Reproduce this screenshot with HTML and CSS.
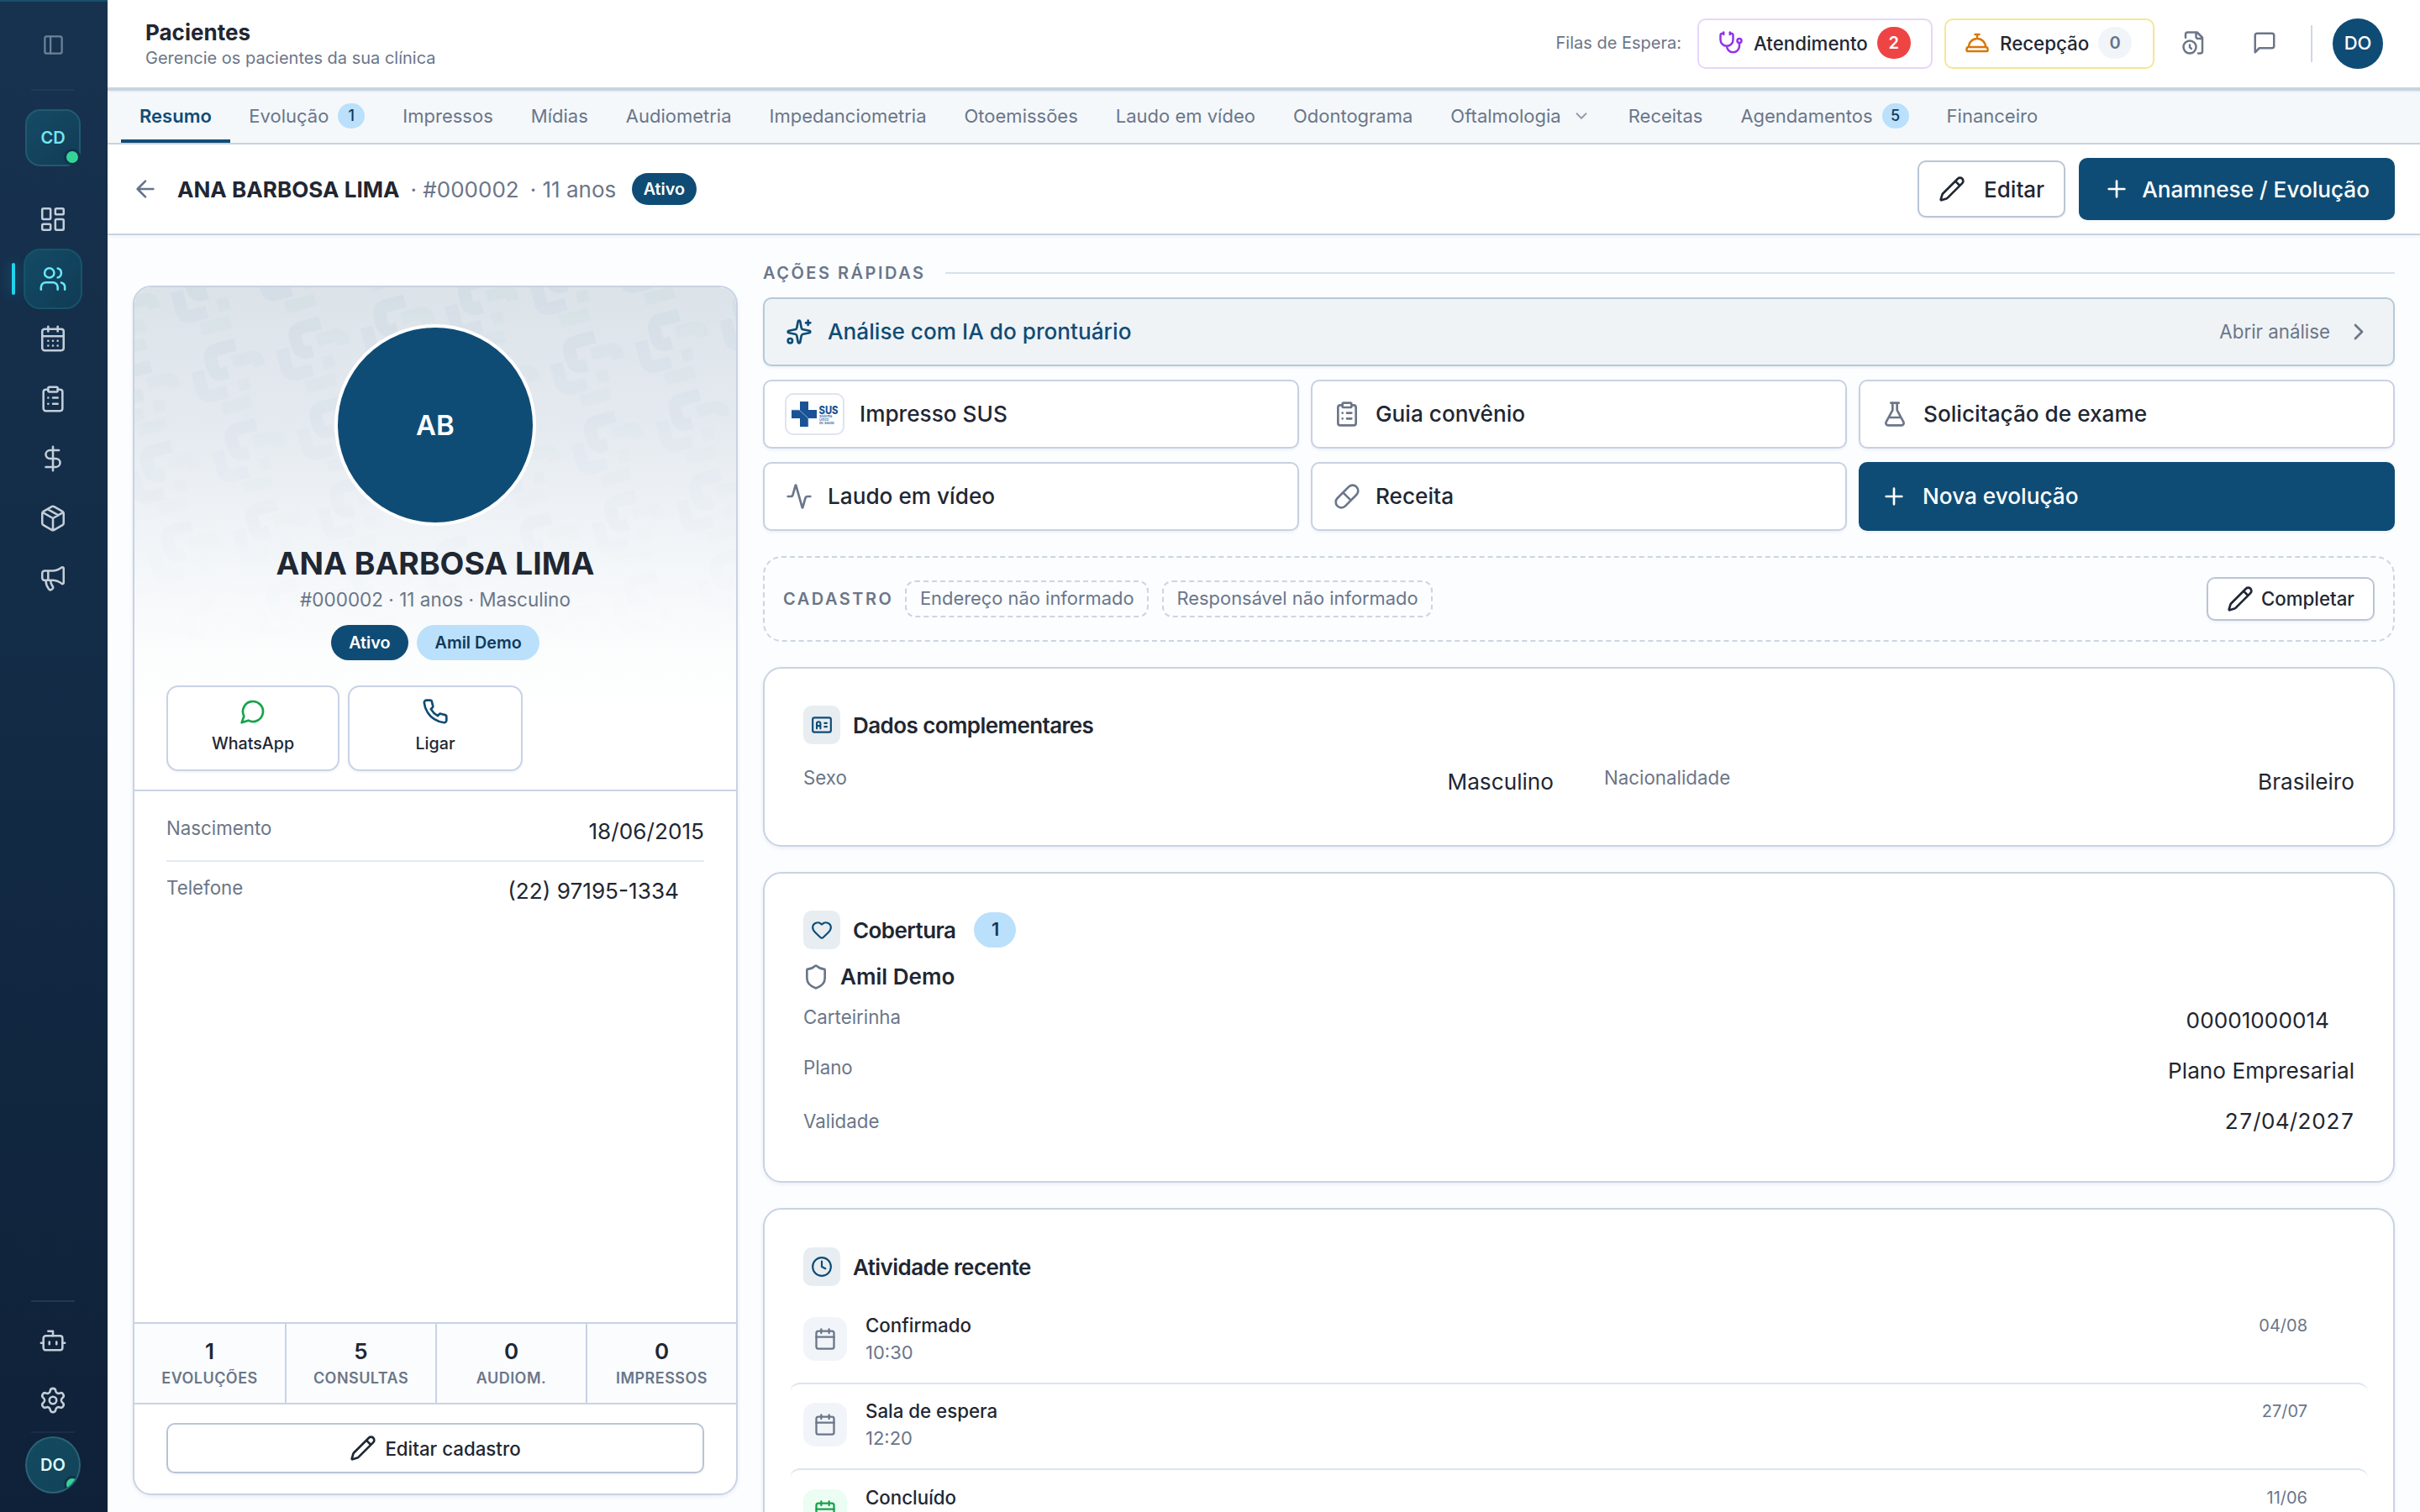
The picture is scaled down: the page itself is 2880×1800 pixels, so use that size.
FILE: index.html
```
<!DOCTYPE html>
<html lang="pt-BR">
<head>
    <meta charset="UTF-8">
    <meta name="viewport" content="width=device-width, initial-scale=1.0">
    <title>Pacientes</title>
    <link rel="stylesheet" href="styles.css">
</head>
<body>
    <!-- Icon sprite -->
    <svg class="sprite" aria-hidden="true">
        <symbol id="panel" viewBox="0 0 24 24"><rect x="3" y="3" width="18" height="18" rx="2"/><path d="M9 3v18"/></symbol>
        <symbol id="dashboard" viewBox="0 0 24 24"><rect x="3" y="3" width="7" height="9" rx="1"/><rect x="14" y="3" width="7" height="5" rx="1"/><rect x="14" y="12" width="7" height="9" rx="1"/><rect x="3" y="16" width="7" height="5" rx="1"/></symbol>
        <symbol id="users" viewBox="0 0 24 24"><path d="M16 21v-2a4 4 0 0 0-4-4H6a4 4 0 0 0-4 4v2M16 3.128a4 4 0 0 1 0 7.744M22 21v-2a4 4 0 0 0-3-3.87"/><circle cx="9" cy="7" r="4"/></symbol>
        <symbol id="calendar-days" viewBox="0 0 24 24"><path d="M8 2v4M16 2v4M3 10h18M8 14h.01M12 14h.01M16 14h.01M8 18h.01M12 18h.01M16 18h.01"/><rect x="3" y="4" width="18" height="18" rx="2"/></symbol>
        <symbol id="calendar" viewBox="0 0 24 24"><path d="M8 2v4M16 2v4M3 10h18"/><rect x="3" y="4" width="18" height="18" rx="2"/></symbol>
        <symbol id="clipboard" viewBox="0 0 24 24"><rect x="8" y="2" width="8" height="4" rx="1"/><path d="M16 4h2a2 2 0 0 1 2 2v14a2 2 0 0 1-2 2H6a2 2 0 0 1-2-2V6a2 2 0 0 1 2-2h2M12 11h4M12 16h4M8 11h.01M8 16h.01"/></symbol>
        <symbol id="dollar" viewBox="0 0 24 24"><path d="M12 2v20M17 5H9.5a3.5 3.5 0 0 0 0 7h5a3.5 3.5 0 0 1 0 7H6"/></symbol>
        <symbol id="package" viewBox="0 0 24 24"><path d="M11 21.73a2 2 0 0 0 2 0l7-4A2 2 0 0 0 21 16V8a2 2 0 0 0-1-1.73l-7-4a2 2 0 0 0-2 0l-7 4A2 2 0 0 0 3 8v8a2 2 0 0 0 1 1.73zM12 22V12M3.29 7 12 12l8.71-5M7.5 4.27l9 5.15"/></symbol>
        <symbol id="megaphone" viewBox="0 0 24 24"><path d="M11 6a13 13 0 0 0 8.4-2.8A1 1 0 0 1 21 4v12a1 1 0 0 1-1.6.8A13 13 0 0 0 11 14H5a2 2 0 0 1-2-2V8a2 2 0 0 1 2-2zM6 14a12 12 0 0 0 2.4 7.2 2 2 0 0 0 3.2-2.4A8 8 0 0 1 10 14M8 6v8"/></symbol>
        <symbol id="bot" viewBox="0 0 24 24"><path d="M12 8V4H8M2 14h2M20 14h2M15 13v2M9 13v2"/><rect x="4" y="8" width="16" height="12" rx="2"/></symbol>
        <symbol id="settings" viewBox="0 0 24 24"><path d="M9.671 4.136a2.34 2.34 0 0 1 4.659 0 2.34 2.34 0 0 0 3.319 1.915 2.34 2.34 0 0 1 2.33 4.033 2.34 2.34 0 0 0 0 3.831 2.34 2.34 0 0 1-2.33 4.033 2.34 2.34 0 0 0-3.319 1.915 2.34 2.34 0 0 1-4.659 0 2.34 2.34 0 0 0-3.32-1.915 2.34 2.34 0 0 1-2.33-4.033 2.34 2.34 0 0 0 0-3.831A2.34 2.34 0 0 1 6.35 6.051a2.34 2.34 0 0 0 3.319-1.915"/><circle cx="12" cy="12" r="3"/></symbol>
        <symbol id="stethoscope" viewBox="0 0 24 24"><path d="M11 2v2M5 2v2M5 3H4a2 2 0 0 0-2 2v4a6 6 0 0 0 12 0V5a2 2 0 0 0-2-2h-1M8 15a6 6 0 0 0 12 0v-3"/><circle cx="20" cy="10" r="2"/></symbol>
        <symbol id="bell" viewBox="0 0 24 24"><path d="M3 20a1 1 0 0 1-1-1v-1a2 2 0 0 1 2-2h16a2 2 0 0 1 2 2v1a1 1 0 0 1-1 1ZM20 16a8 8 0 1 0-16 0M12 4v4M10 4h4"/></symbol>
        <symbol id="file-clock" viewBox="0 0 24 24"><path d="M16 22h2a2 2 0 0 0 2-2V7l-5-5H6a2 2 0 0 0-2 2v3M14 2v4a2 2 0 0 0 2 2h4M9.5 17.5 8 16.25V14"/><circle cx="8" cy="16" r="6"/></symbol>
        <symbol id="message" viewBox="0 0 24 24"><path d="M21 15a2 2 0 0 1-2 2H7l-4 4V5a2 2 0 0 1 2-2h14a2 2 0 0 1 2 2z"/></symbol>
        <symbol id="chat" viewBox="0 0 24 24"><path d="M7.9 20A9 9 0 1 0 4 16.1L2 22Z"/></symbol>
        <symbol id="phone" viewBox="0 0 24 24"><path d="M22 16.92v3a2 2 0 0 1-2.18 2 19.79 19.79 0 0 1-8.63-3.07 19.5 19.5 0 0 1-6-6 19.79 19.79 0 0 1-3.07-8.67A2 2 0 0 1 4.11 2h3a2 2 0 0 1 2 1.72 12.84 12.84 0 0 0 .7 2.81 2 2 0 0 1-.45 2.11L8.09 9.91a16 16 0 0 0 6 6l1.27-1.27a2 2 0 0 1 2.11-.45 12.84 12.84 0 0 0 2.81.7A2 2 0 0 1 22 16.92z"/></symbol>
        <symbol id="arrow-left" viewBox="0 0 24 24"><path d="m12 19-7-7 7-7M19 12H5"/></symbol>
        <symbol id="pencil" viewBox="0 0 24 24"><path d="M21.174 6.812a1 1 0 0 0-3.986-3.987L3.842 16.174a2 2 0 0 0-.5.83l-1.321 4.352a.5.5 0 0 0 .623.622l4.353-1.32a2 2 0 0 0 .83-.497zM15 5l4 4"/></symbol>
        <symbol id="plus" viewBox="0 0 24 24"><path d="M5 12h14M12 5v14"/></symbol>
        <symbol id="chevron-down" viewBox="0 0 24 24"><path d="m6 9 6 6 6-6"/></symbol>
        <symbol id="chevron-right" viewBox="0 0 24 24"><path d="m9 18 6-6-6-6"/></symbol>
        <symbol id="sparkles" viewBox="0 0 24 24"><path d="M11.017 2.814a1 1 0 0 1 1.966 0l1.051 5.558a2 2 0 0 0 1.594 1.594l5.558 1.051a1 1 0 0 1 0 1.966l-5.558 1.051a2 2 0 0 0-1.594 1.594l-1.051 5.558a1 1 0 0 1-1.966 0l-1.051-5.558a2 2 0 0 0-1.594-1.594l-5.558-1.051a1 1 0 0 1 0-1.966l5.558-1.051a2 2 0 0 0 1.594-1.594zM20 2v4M22 4h-4"/><circle cx="4" cy="20" r="2"/></symbol>
        <symbol id="flask" viewBox="0 0 24 24"><path d="M14 2v6a2 2 0 0 0 .245.96l5.51 10.08A2 2 0 0 1 18 22H6a2 2 0 0 1-1.755-2.96l5.51-10.08A2 2 0 0 0 10 8V2M6.453 15h11.094M8.5 2h7"/></symbol>
        <symbol id="activity" viewBox="0 0 24 24"><path d="M22 12h-2.48a2 2 0 0 0-1.93 1.46l-2.35 8.36a.25.25 0 0 1-.48 0L9.24 2.18a.25.25 0 0 0-.48 0l-2.35 8.36A2 2 0 0 1 4.49 12H2"/></symbol>
        <symbol id="pill" viewBox="0 0 24 24"><path d="m10.5 20.5 10-10a4.95 4.95 0 1 0-7-7l-10 10a4.95 4.95 0 1 0 7 7ZM8.5 8.5l7 7"/></symbol>
        <symbol id="id-card" viewBox="0 0 24 24"><rect x="2" y="4" width="20" height="16" rx="2"/><path d="M6.5 16v-5.500a2 2 0 0 1 4 0V16M6.500 13h4M15 10h2.500M15 14h2.500"/></symbol>
        <symbol id="heart" viewBox="0 0 24 24"><path d="M2 9.500a5.500 5.500 0 0 1 9.591-3.676.56.56 0 0 0 .818 0A5.490 5.490 0 0 1 22 9.500c0 2.290-1.500 4-3 5.500l-5.492 5.313a2 2 0 0 1-3 .019L5 15c-1.500-1.500-3-3.200-3-5.500"/></symbol>
        <symbol id="shield" viewBox="0 0 24 24"><path d="M20 13c0 5-3.500 7.500-7.660 8.950a1 1 0 0 1-.67-.01C7.500 20.500 4 18 4 13V6a1 1 0 0 1 1-1c2 0 4.500-1.200 6.240-2.720a1.170 1.170 0 0 1 1.520 0C14.510 3.810 17 5 19 5a1 1 0 0 1 1 1z"/></symbol>
        <symbol id="clock" viewBox="0 0 24 24"><circle cx="12" cy="12" r="10"/><path d="M12 6v6l4 2"/></symbol>
    </svg>

    <div class="app">
        <!-- Sidebar -->
        <aside class="sidebar">
            <div class="side-toggle"><svg class="icon"><use href="#panel"/></svg></div>
            <div class="side-line"></div>
            <div class="clinic">CD<span class="online"></span></div>
            <nav class="side-nav">
                <a class="side-item"><svg class="icon"><use href="#dashboard"/></svg></a>
                <a class="side-item active"><svg class="icon"><use href="#users"/></svg></a>
                <a class="side-item"><svg class="icon"><use href="#calendar-days"/></svg></a>
                <a class="side-item"><svg class="icon"><use href="#clipboard"/></svg></a>
                <a class="side-item"><svg class="icon"><use href="#dollar"/></svg></a>
                <a class="side-item"><svg class="icon"><use href="#package"/></svg></a>
                <a class="side-item"><svg class="icon"><use href="#megaphone"/></svg></a>
            </nav>
            <div class="side-bottom">
                <div class="side-line"></div>
                <a class="side-item"><svg class="icon"><use href="#bot"/></svg></a>
                <a class="side-item"><svg class="icon"><use href="#settings"/></svg></a>
                <div class="side-line faint"></div>
                <div class="side-user">DO<span class="online"></span></div>
            </div>
        </aside>

        <div class="page">
            <!-- Header -->
            <header class="topbar">
                <div class="heading">
                    <h1>Pacientes</h1>
                    <p>Gerencie os pacientes da sua clínica</p>
                </div>
                <div class="queues">
                    <span class="queue-label">Filas de Espera:</span>
                    <button class="queue purple"><svg class="icon"><use href="#stethoscope"/></svg>Atendimento<span class="count red">2</span></button>
                    <button class="queue yellow"><svg class="icon"><use href="#bell"/></svg>Recepção<span class="count gray">0</span></button>
                    <svg class="icon top-icon"><use href="#file-clock"/></svg>
                    <svg class="icon top-icon"><use href="#message"/></svg>
                    <div class="top-user">DO</div>
                </div>
            </header>

            <nav class="tabs">
                <a class="tab active">Resumo</a>
                <a class="tab">Evolução<span class="tab-count">1</span></a>
                <a class="tab">Impressos</a>
                <a class="tab">Mídias</a>
                <a class="tab">Audiometria</a>
                <a class="tab">Impedanciometria</a>
                <a class="tab">Otoemissões</a>
                <a class="tab">Laudo em vídeo</a>
                <a class="tab">Odontograma</a>
                <a class="tab">Oftalmologia<svg class="icon"><use href="#chevron-down"/></svg></a>
                <a class="tab">Receitas</a>
                <a class="tab">Agendamentos<span class="tab-count">5</span></a>
                <a class="tab">Financeiro</a>
            </nav>

            <section class="patient-bar">
                <svg class="icon back"><use href="#arrow-left"/></svg>
                <strong>ANA BARBOSA LIMA</strong>
                <span class="meta">· #000002</span>
                <span class="meta">· 11 anos</span>
                <span class="badge small">Ativo</span>
                <div class="patient-actions">
                    <button class="btn"><svg class="icon"><use href="#pencil"/></svg>Editar</button>
                    <button class="btn primary"><svg class="icon"><use href="#plus"/></svg>Anamnese / Evolução</button>
                </div>
            </section>

            <main class="content">
                <!-- Patient card -->
                <section class="profile">
                    <div class="hero">
                        <svg class="hero-pattern">
                            <defs>
                                <pattern id="logos" width="104" height="98" patternUnits="userSpaceOnUse" patternTransform="translate(50 72) rotate(-14.500)">
                                    <g fill="none" stroke-width="15" stroke-linejoin="round">
                                        <path class="mark-blue" d="M69 14H45a9 9 0 0 0-9 9v12a9 9 0 0 0 9 9h7"/>
                                        <path class="mark-green" d="M60 33h23a7 7 0 0 1 7 7v6"/>
                                        <path class="mark-violet" d="M17 33v24a9 9 0 0 0 9 9h20"/>
                                        <path class="mark-green" d="M60 62h14"/>
                                        <path class="mark-green" d="M34 84h36"/>
                                    </g>
                                </pattern>
                            </defs>
                            <rect width="100%" height="100%" fill="url(#logos)"/>
                        </svg>
                        <div class="avatar">AB</div>
                        <h2>ANA BARBOSA LIMA</h2>
                        <p class="hero-sub">#000002 · 11 anos · Masculino</p>
                        <div class="badges">
                            <span class="badge">Ativo</span>
                            <span class="badge light">Amil Demo</span>
                        </div>
                        <div class="contacts">
                            <button class="contact"><svg class="icon green"><use href="#chat"/></svg>WhatsApp</button>
                            <button class="contact"><svg class="icon blue"><use href="#phone"/></svg>Ligar</button>
                        </div>
                    </div>
                    <div class="profile-data">
                        <div class="row"><span class="label">Nascimento</span><span class="value">18/06/2015</span></div>
                        <div class="row copyable"><span class="label">Telefone</span><span class="value">(22) 97195-1334</span></div>
                    </div>
                    <div class="stats">
                        <div class="stat"><b>1</b><span>EVOLUÇÕES</span></div>
                        <div class="stat"><b>5</b><span>CONSULTAS</span></div>
                        <div class="stat"><b>0</b><span>AUDIOM.</span></div>
                        <div class="stat"><b>0</b><span>IMPRESSOS</span></div>
                    </div>
                    <div class="profile-footer">
                        <button class="btn slim"><svg class="icon"><use href="#pencil"/></svg>Editar cadastro</button>
                    </div>
                </section>

                <!-- Main column -->
                <div class="column">
                    <div class="section-title"><span>AÇÕES RÁPIDAS</span></div>
                    <div class="actions">
                        <a class="action ai"><svg class="icon"><use href="#sparkles"/></svg>Análise com IA do prontuário<span class="open">Abrir análise</span><svg class="icon chevron"><use href="#chevron-right"/></svg></a>
                        <a class="action">
                            <span class="sus">
                                <svg viewBox="0 0 58 32">
                                    <path class="sus-cross" d="M11 1h10v10h10v10H21v10H11V21H1V11h10z"/>
                                    <path class="sus-line" d="M1 11h9l11 10v10"/>
                                    <text class="sus-name" x="33.500" y="15.500" textLength="23" lengthAdjust="spacingAndGlyphs">SUS</text>
                                    <text class="sus-text" x="34" y="20">Sistema</text>
                                    <text class="sus-text" x="34" y="24">Único</text>
                                    <text class="sus-text" x="34" y="28">de Saúde</text>
                                </svg>
                            </span>Impresso SUS</a>
                        <a class="action"><svg class="icon"><use href="#clipboard"/></svg>Guia convênio</a>
                        <a class="action"><svg class="icon"><use href="#flask"/></svg>Solicitação de exame</a>
                        <a class="action"><svg class="icon"><use href="#activity"/></svg>Laudo em vídeo</a>
                        <a class="action"><svg class="icon"><use href="#pill"/></svg>Receita</a>
                        <a class="action solid"><svg class="icon"><use href="#plus"/></svg>Nova evolução</a>
                    </div>

                    <div class="pending">
                        <span class="pending-title">CADASTRO</span>
                        <span class="chip">Endereço não informado</span>
                        <span class="chip">Responsável não informado</span>
                        <button class="btn compact"><svg class="icon"><use href="#pencil"/></svg>Completar</button>
                    </div>

                    <section class="card extra">
                        <h3><span class="card-icon"><svg class="icon"><use href="#id-card"/></svg></span>Dados complementares</h3>
                        <div class="pair">
                            <div class="row"><span class="label">Sexo</span><span class="value">Masculino</span></div>
                            <div class="row"><span class="label">Nacionalidade</span><span class="value">Brasileiro</span></div>
                        </div>
                    </section>

                    <section class="card coverage">
                        <h3><span class="card-icon"><svg class="icon"><use href="#heart"/></svg></span>Cobertura<span class="card-count">1</span></h3>
                        <div class="plan"><svg class="icon"><use href="#shield"/></svg>Amil Demo</div>
                        <div class="row copyable"><span class="label">Carteirinha</span><span class="value">00001000014</span></div>
                        <div class="row"><span class="label">Plano</span><span class="value">Plano Empresarial</span></div>
                        <div class="row even"><span class="label">Validade</span><span class="value tabular">27/04/2027</span></div>
                    </section>

                    <section class="card recent">
                        <h3><span class="card-icon"><svg class="icon"><use href="#clock"/></svg></span>Atividade recente</h3>
                        <div class="event"><span class="event-icon"><svg class="icon"><use href="#calendar"/></svg></span><div><b>Confirmado</b><span>10:30</span></div><time>04/08</time></div>
                        <div class="event"><span class="event-icon"><svg class="icon"><use href="#calendar"/></svg></span><div><b>Sala de espera</b><span>12:20</span></div><time>27/07</time></div>
                        <div class="event done"><span class="event-icon"><svg class="icon"><use href="#calendar"/></svg></span><div><b>Concluído</b></div><time>11/06</time></div>
                    </section>
                </div>
            </main>
        </div>
    </div>
</body>
</html>
```
FILE: styles.css
```
/* General Styles */
* {
    box-sizing: border-box;
}
body {
    margin: 0;
    height: 1800px;
    overflow: hidden;
    font-family: Inter, "Liberation Sans", sans-serif;
    font-size: 26px;
    color: #1f2733;
    background-color: #fbfdff;
}
h1, h2, h3, p {
    margin: 0;
}
button {
    font-family: inherit;
    color: inherit;
    margin: 0;
    padding: 0;
}
.sprite {
    display: none;
}
.icon {
    width: 32px;
    height: 32px;
    flex: none;
    fill: none;
    stroke: currentColor;
    stroke-width: 2;
    stroke-linecap: round;
    stroke-linejoin: round;
}
.app {
    display: flex;
    height: 1800px;
    overflow: hidden;
}

/* Sidebar */
.sidebar {
    width: 128px;
    flex: none;
    display: flex;
    flex-direction: column;
    align-items: center;
    padding-right: 2px;
    border-top: 2px solid #17506d;
    background: linear-gradient(#17324f, #132c47 40%, #0f2138);
    color: #c3ced9;
}
.side-toggle {
    height: 104px;
    padding-top: 38px;
    color: #6c8297;
}
.side-toggle .icon {
    width: 27px;
    height: 27px;
}
.side-line {
    width: 52px;
    height: 2px;
    background-color: #213a54;
}
.side-line.faint {
    background-color: #182e47;
}
.clinic {
    position: relative;
    width: 66px;
    height: 68px;
    margin-top: 22px;
    border: 2px solid #225a71;
    border-radius: 18px;
    background: linear-gradient(135deg, #154b65, #113c56);
    color: #74e5f3;
    font-size: 20px;
    font-weight: 600;
    line-height: 64px;
    text-align: center;
}
.online {
    position: absolute;
    right: -2px;
    bottom: -1px;
    width: 20px;
    height: 20px;
    border: 3px solid #12324a;
    border-radius: 50%;
    background-color: #34d399;
}
.side-nav {
    margin-top: 27px;
    display: flex;
    flex-direction: column;
    align-items: center;
}
.side-item {
    position: relative;
    width: 70px;
    height: 71.300px;
    display: flex;
    align-items: center;
    justify-content: center;
}
.side-item .icon {
    width: 34px;
    height: 34px;
    stroke-width: 1.800;
}
.side-item.active {
    border: 2px solid #165467;
    border-radius: 20px;
    background: linear-gradient(135deg, #134b65, #113b56);
    color: #67e8f9;
}
.side-item.active::before {
    content: "";
    position: absolute;
    left: -16px;
    top: 15px;
    width: 4px;
    height: 38px;
    border-radius: 2px;
    background-color: #22d3ee;
    box-shadow: 0 0 16px rgba(34, 211, 238, 0.400);
}
.side-bottom {
    margin-top: auto;
    padding-bottom: 22px;
    display: flex;
    flex-direction: column;
    align-items: center;
}
.side-bottom .side-line {
    margin-bottom: 10px;
}
.side-bottom .side-line.faint {
    margin: 1px 0 4px;
}
.side-user {
    position: relative;
    width: 66px;
    height: 68px;
    overflow: hidden;
    border: 2px solid #2b6276;
    border-radius: 50%;
    background: linear-gradient(135deg, #134b60, #124258);
    color: #dff8fd;
    font-size: 20px;
    font-weight: 600;
    line-height: 64px;
    text-align: center;
}

/* Top bar */
.page {
    flex: 1;
    min-width: 0;
    display: flex;
    flex-direction: column;
}
.topbar {
    height: 108px;
    flex: none;
    display: flex;
    justify-content: space-between;
    padding: 0 44px 0 45px;
    background-color: #fff;
    border-bottom: 4px solid #c8d3df;
}
.heading {
    padding-top: 23px;
}
.heading h1 {
    font-size: 26px;
    line-height: 32px;
    font-weight: 700;
}
.heading p {
    margin-top: 1px;
    font-size: 20px;
    line-height: 26px;
    color: #6b7689;
}
.queues {
    display: flex;
    align-items: center;
    font-size: 20px;
    color: #6b7689;
}
.queue-label {
    margin: 0 19px 2px 0;
}
.queue {
    height: 60px;
    display: flex;
    align-items: center;
    padding-bottom: 2px;
    border: 2px solid #e6d6fb;
    border-radius: 10px;
    background-color: #fff;
    font-size: 22.300px;
    font-weight: 500;
    color: #1f2733;
}
.queue .icon {
    width: 30px;
    height: 30px;
    margin-right: 12px;
}
.queue.purple {
    width: 280px;
    margin-right: 14px;
    padding-left: 23px;
}
.queue.yellow {
    width: 250px;
    padding-left: 22px;
    border-color: #f7e694;
}
.queue.purple .icon {
    color: #9333ea;
}
.queue.yellow .icon {
    color: #d97706;
}
.count {
    width: 40px;
    height: 38px;
    margin-left: 11px;
    border-radius: 20px;
    font-size: 20px;
    font-weight: 600;
    line-height: 38px;
    text-align: center;
}
.count.red {
    background-color: #ef4444;
    color: #fff;
}
.count.gray {
    background-color: #f1f5f9;
    color: #64748b;
}
.top-icon {
    width: 30px;
    height: 30px;
    margin-left: 32px;
    margin-bottom: 2px;
}
.top-icon + .top-icon {
    margin-left: 54px;
}
.top-user {
    position: relative;
    width: 60px;
    height: 60px;
    margin-left: 66px;
    border-radius: 50%;
    background-color: #0f4c75;
    color: #fff;
    font-size: 22px;
    font-weight: 500;
    line-height: 58px;
    text-align: center;
}
.top-user::before {
    content: "";
    position: absolute;
    left: -26px;
    top: 8px;
    width: 2px;
    height: 44px;
    background-color: #cfd8e3;
}

/* Tabs */
.tabs {
    height: 64px;
    flex: none;
    display: flex;
    padding: 0 16px;
    border-top: 2px solid #e9eff5;
    border-bottom: 2px solid #c8d3e0;
    background-color: #f4f8fb;
}
.tab {
    display: flex;
    align-items: center;
    padding: 0 22.500px 4px;
    font-size: 22px;
    color: #6b7689;
}
.tab.active {
    padding: 0 22px;
    border-bottom: 4px solid #0f4c75;
    color: #0f4c75;
    font-weight: 600;
}
.tab .icon {
    width: 22px;
    height: 22px;
    margin-left: 13px;
    opacity: 0.700;
}
.tab-count {
    width: 32px;
    height: 30px;
    margin-left: 11px;
    border-radius: 16px;
    background-color: #bae0fb;
    color: #12395a;
    font-size: 18px;
    font-weight: 500;
    line-height: 30px;
    text-align: center;
}

/* Patient bar */
.patient-bar {
    height: 108px;
    flex: none;
    display: flex;
    align-items: center;
    padding: 0 30px 0 29px;
    background-color: #fff;
    border-bottom: 2px solid #c8d3e0;
    box-shadow: 0 2px 4px rgba(30, 60, 100, 0.050);
}
.back {
    margin-right: 22px;
    color: #64748b;
}
.patient-bar strong {
    font-size: 26.100px;
}
.meta {
    margin-left: 13px;
    font-size: 26px;
    color: #6b7689;
}
.badge {
    height: 42px;
    padding: 0 20px;
    border-radius: 21px;
    background-color: #0f4c75;
    color: #fff;
    font-size: 19.800px;
    font-weight: 600;
    line-height: 42px;
}
.badge.small {
    height: 38px;
    margin-left: 19px;
    padding: 0 13.500px;
    line-height: 38px;
}
.badge.light {
    background-color: #bae0fb;
    color: #12395a;
}
.patient-actions {
    margin-left: auto;
    display: flex;
    align-items: center;
    gap: 16px;
}
.btn {
    height: 68px;
    padding: 0 23px;
    display: flex;
    align-items: center;
    gap: 22px;
    border: 2px solid #b9c5d5;
    border-radius: 10px;
    background-color: #fff;
    font-size: 26px;
    font-weight: 500;
    box-shadow: 0 2px 3px rgba(30, 60, 100, 0.050);
}
.btn.primary {
    height: 74px;
    padding: 0 30px 0 29px;
    gap: 14px;
    border: 0;
    background-color: #0f4c75;
    color: #fff;
    font-size: 26.150px;
}
.btn.slim {
    width: 100%;
    height: 60px;
    justify-content: center;
    gap: 10px;
    font-size: 22.300px;
}
.btn.compact {
    height: 52px;
    margin-left: auto;
    padding: 0 22px 1px;
    gap: 9px;
    font-size: 22.300px;
}

/* Content */
.content {
    flex: 1;
    min-height: 0;
    display: flex;
    gap: 30px;
    padding: 30px 30px 0;
}
.profile {
    width: 720px;
    height: 1440px;
    flex: none;
    margin-top: 30px;
    display: flex;
    flex-direction: column;
    overflow: hidden;
    border: 2px solid #c8d3e3;
    border-radius: 22px;
    background-color: #fff;
    box-shadow: 0 2px 5px rgba(30, 60, 100, 0.070);
}
.hero {
    position: relative;
    height: 600px;
    flex: none;
    display: flex;
    flex-direction: column;
    align-items: center;
    padding: 44px 38px 0;
    border-bottom: 2px solid #c8d3e3;
    background: linear-gradient(#dbe3e9, #e5eaf0 28%, #f2f5f8 52%, #fcfdfd 74%, #fff 85%);
}
.hero > * {
    position: relative;
}
.hero .hero-pattern {
    position: absolute;
    left: 0;
    top: 0;
    width: 100%;
    height: 440px;
    -webkit-mask-image: linear-gradient(#000, rgba(0, 0, 0, 0.650) 30%, transparent);
    mask-image: linear-gradient(#000, rgba(0, 0, 0, 0.650) 30%, transparent);
}
.mark-blue {
    stroke: rgba(15, 90, 150, 0.045);
}
.mark-green {
    stroke: rgba(20, 120, 100, 0.025);
}
.mark-violet {
    stroke: rgba(40, 80, 160, 0.035);
}
.avatar {
    width: 240px;
    height: 240px;
    flex: none;
    border: 4px solid #fff;
    border-radius: 50%;
    background-color: #0f4c75;
    color: #fff;
    font-size: 33px;
    font-weight: 600;
    line-height: 232px;
    text-align: center;
}
.hero h2 {
    margin-top: 22px;
    font-size: 37.400px;
    line-height: 46px;
}
.hero-sub {
    margin-top: 4px;
    font-size: 22.500px;
    line-height: 32px;
    color: #6b7689;
}
.badges {
    display: flex;
    gap: 10px;
    margin-top: 14px;
}
.badges .badge {
    padding: 0 21.500px;
}
.contacts {
    align-self: stretch;
    display: grid;
    grid-template-columns: 206px 208px;
    gap: 10px;
    margin-top: 30px;
}
.contact {
    height: 102px;
    padding-top: 13px;
    display: flex;
    flex-direction: column;
    align-items: center;
    gap: 8px;
    border: 2px solid #c8d3e6;
    border-radius: 14px;
    background-color: #fff;
    font-size: 19.700px;
    font-weight: 500;
    line-height: 28px;
    box-shadow: 0 2px 3px rgba(30, 60, 100, 0.050);
}
.green {
    color: #16a34a;
}
.blue {
    color: #0f4c75;
}
.profile-data {
    flex: 1;
    padding: 12px 38px;
}
.row {
    display: flex;
    justify-content: space-between;
    height: 70px;
    padding-top: 16px;
    line-height: 32px;
}
.profile-data .row + .row {
    padding-top: 15px;
    border-top: 2px solid #e3e9f1;
}
.row .label {
    font-size: 22.300px;
    color: #6b7689;
    line-height: 32px;
}
.row .value {
    padding-top: 4px;
    font-size: 26.200px;
    line-height: 32px;
}
.row.copyable .value {
    margin-right: 30px;
}
.tabular {
    font-variant-numeric: tabular-nums;
}
.stats {
    height: 98px;
    flex: none;
    display: grid;
    grid-template-columns: repeat(4, 1fr);
    border-top: 2px solid #c8d3e3;
    border-bottom: 2px solid #c8d3e3;
    background-color: #fafcfe;
}
.stat {
    display: flex;
    flex-direction: column;
    align-items: center;
    padding-top: 17px;
}
.stat + .stat {
    border-left: 2px solid #c8d3e3;
}
.stat b {
    font-size: 26px;
    font-weight: 600;
    line-height: 32px;
}
.stat span {
    margin-top: 3px;
    font-size: 18px;
    font-weight: 600;
    line-height: 26px;
    letter-spacing: 0.450px;
    color: #6b7689;
}
.profile-footer {
    height: 106px;
    flex: none;
    padding: 22px 38px;
}

/* Quick actions */
.column {
    flex: 1;
    min-width: 0;
}
.section-title {
    height: 30px;
    display: flex;
    align-items: center;
    gap: 23px;
    font-size: 20px;
    font-weight: 600;
    letter-spacing: 2.500px;
    color: #6b7689;
}
.section-title::after {
    content: "";
    flex: 1;
    height: 2px;
    background-color: #d8e0eb;
}
.actions {
    display: grid;
    grid-template-columns: repeat(3, 1fr);
    gap: 16px 14px;
    margin-top: 14px;
}
.action {
    height: 82px;
    display: flex;
    align-items: center;
    gap: 18px;
    padding: 0 25px 1px;
    border: 2px solid #c8d0e3;
    border-radius: 10px;
    background-color: #fff;
    font-size: 26.200px;
    font-weight: 500;
    box-shadow: 0 2px 3px rgba(30, 60, 100, 0.060);
}
.action .icon {
    color: #6b7689;
}
.action.ai {
    grid-column: 1 / -1;
    border-color: #b7c9d6;
    background-color: #eff3f6;
    color: #0f4c75;
}
.action.ai .icon {
    color: #0f4c75;
}
.action .open {
    margin-left: auto;
    font-size: 22.300px;
    font-weight: 400;
    color: #6b7689;
}
.action.ai .chevron {
    color: #6b7689;
}
.action.solid {
    border-color: #0f4c75;
    background-color: #0f4c75;
    color: #fff;
}
.action.solid .icon {
    margin-left: -1px;
    color: #fff;
}
.sus {
    width: 71px;
    height: 50px;
    margin-left: -1px;
    padding: 7px 5px;
    border: 2px solid #dfe4ef;
    border-radius: 10px;
}
.sus svg {
    display: block;
    width: 58px;
    height: 32px;
}
.sus-cross {
    fill: #1a5296;
}
.sus-line {
    fill: none;
    stroke: #b9cfe8;
    stroke-width: 0.700;
}
.sus-name {
    fill: #1a5296;
    font-size: 13px;
    font-weight: 800;
}
.sus-text {
    fill: #1a5296;
    font-size: 4px;
    font-weight: 500;
}

/* Pending data */
.pending {
    height: 102px;
    margin-top: 30px;
    padding: 0 22px;
    display: flex;
    align-items: center;
    border: 2px dashed #cdd5e1;
    border-radius: 22px;
}
.pending-title {
    margin-right: 14px;
    font-size: 20px;
    font-weight: 600;
    letter-spacing: 2.500px;
    color: #6b7689;
}
.chip {
    height: 44px;
    margin-right: 16px;
    padding: 0 15.500px;
    border: 2px dashed #cdd5e1;
    border-radius: 12px;
    font-size: 21.900px;
    line-height: 39px;
    color: #6b7689;
}

/* Cards */
.card {
    margin-top: 30px;
    padding: 44px 46px 0;
    border: 2px solid #c8d3e3;
    border-radius: 22px;
    background-color: #fff;
    box-shadow: 0 2px 5px rgba(30, 60, 100, 0.070);
}
.card h3 {
    height: 46px;
    display: flex;
    align-items: center;
    font-size: 26px;
    font-weight: 600;
    letter-spacing: -0.570px;
}
.card-icon {
    width: 44px;
    height: 46px;
    margin-right: 15px;
    display: flex;
    align-items: center;
    justify-content: center;
    border-radius: 10px;
    background-color: #e7edf1;
    color: #0f4c75;
}
.card-icon .icon {
    width: 26px;
    height: 26px;
}
.card-count {
    width: 50px;
    height: 42px;
    margin-left: 22px;
    border-radius: 21px;
    background-color: #bae0fb;
    color: #12395a;
    font-size: 22px;
    line-height: 41px;
    text-align: center;
}
.extra {
    height: 214px;
}
.pair {
    display: grid;
    grid-template-columns: 1fr 1fr;
    gap: 60px;
    margin-top: 8px;
}
.pair .value {
    padding-top: 5px;
}
.coverage {
    height: 370px;
}
.plan {
    height: 65px;
    display: flex;
    align-items: center;
    gap: 12px;
    font-size: 26.100px;
    font-weight: 600;
}
.plan .icon {
    margin-left: -1px;
    margin-right: 1px;
    color: #6b7689;
}
.coverage .row {
    height: 60px;
    padding-top: 0;
}
.coverage .row.even {
    padding-top: 4px;
}
.coverage .row.even .value {
    padding-top: 0;
}

/* Recent activity */
.recent {
    padding: 45px 30px 0;
}
.recent h3 {
    margin: 0 16px 17px;
}
.event {
    height: 98px;
    display: flex;
    align-items: flex-start;
    padding: 20px 72px 0 16px;
}
.event + .event {
    height: 102px;
    padding-top: 22px;
    border-top: 2px solid #dde4ee;
    border-radius: 12px;
}
.event + .event.done {
    padding-top: 23px;
}
.event-icon {
    width: 52px;
    height: 52px;
    margin-right: 22px;
    display: flex;
    align-items: center;
    justify-content: center;
    border-radius: 14px;
    background-color: #f1f5f9;
    color: #6b7689;
}
.event-icon .icon {
    width: 28px;
    height: 28px;
}
.event.done .event-icon {
    background-color: #ecfdf3;
    color: #16a34a;
}
.event div {
    margin-top: -6px;
    display: flex;
    flex-direction: column;
}
.event b {
    font-size: 22.300px;
    font-weight: 500;
    line-height: 32px;
}
.event div span {
    font-size: 22px;
    line-height: 32px;
    color: #6b7689;
}
.event time {
    margin-left: auto;
    margin-top: -6px;
    font-size: 20px;
    line-height: 32px;
    color: #6b7689;
}
```
